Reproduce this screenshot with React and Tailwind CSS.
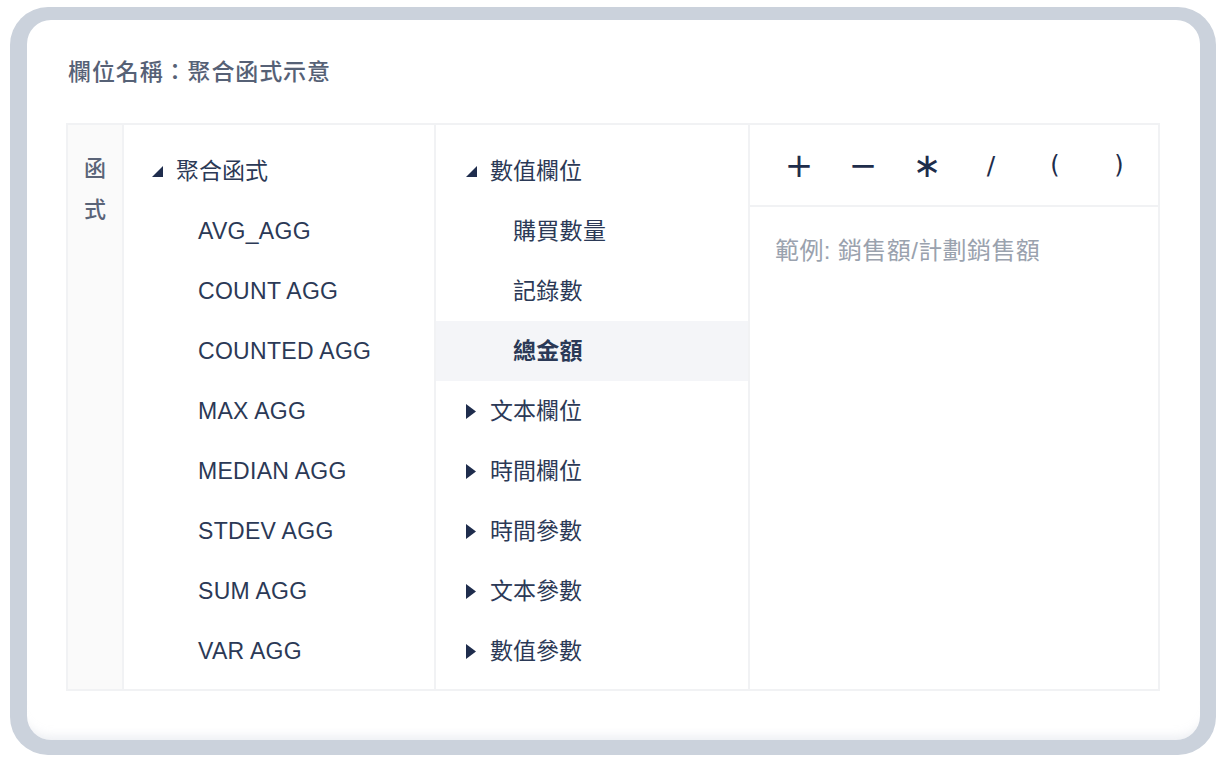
import React from "react";

const FONT = { fontFamily: "'Liberation Sans', 'Noto Sans CJK TC', sans-serif" };

function Down() {
  return (
    <svg width="11" height="11" viewBox="0 0 11 11" className="shrink-0">
      <polygon points="11,0 11,11 0,11" fill="#1f2d4d" />
    </svg>
  );
}

function Right() {
  return (
    <svg width="11" height="15" viewBox="0 0 11 15" className="shrink-0">
      <polygon points="0,0 10,7.5 0,15" fill="#1f2d4d" />
    </svg>
  );
}

function Parent({ label, open, pl }) {
  return (
    <div className={`flex h-[60px] items-center ${pl}`}>
      {open ? <Down /> : <Right />}
      <span className="ml-[13px] text-[23px] text-[#2b3956]">{label}</span>
    </div>
  );
}

function Child({ label, pl, active }) {
  return (
    <div
      className={`flex h-[60px] items-center ${pl} ${active ? "bg-[#f4f5f8] font-bold" : ""}`}
    >
      <span className="text-[23px] tracking-[0.3px] text-[#2b3956]">{label}</span>
    </div>
  );
}

export default function App() {
  const aggs = ["AVG_AGG", "COUNT AGG", "COUNTED AGG", "MAX AGG", "MEDIAN AGG", "STDEV AGG", "SUM AGG", "VAR AGG"];
  const ops = [
    { c: "+", cls: "text-[34px]" },
    { c: "−", cls: "text-[34px]" },
    { c: "∗", cls: "text-[34px]" },
    { c: "/", cls: "text-[25px]" },
    { c: "(", cls: "text-[24px]" },
    { c: ")", cls: "text-[24px]" },
  ];
  return (
    <div className="h-[764px] w-[1226px] bg-white pl-[10px] pt-[7px]" style={FONT}>
      <div className="h-[748px] w-[1206px] rounded-[38px] bg-[#cbd2dc] pl-[17px] pt-[13px]">
        <div className="h-[720px] w-[1173px] rounded-[24px] bg-white pl-[39px] pt-[36px] shadow-[inset_0_-14px_10px_-10px_rgba(203,210,220,0.35)]">
          <div className="pl-[2px] text-[23px] font-medium leading-[32px] tracking-[0.9px] text-[#566176]">
            欄位名稱：聚合函式示意
          </div>
          <div className="mt-[35px] flex w-[1094px] border-2 border-[#f1f2f4]">
            <div className="flex w-[56px] flex-col items-center border-r-2 border-[#f1f2f4] bg-[#fafafa] pt-[23px] text-[22px] font-medium leading-[41px] text-[#5a6478]">
              <span>函</span>
              <span>式</span>
            </div>
            <div className="w-[312px] border-r-2 border-[#f1f2f4] pb-[8px] pt-[16px]">
              <Parent label="聚合函式" open pl="pl-[28px]" />
              {aggs.map((a) => (
                <Child key={a} label={a} pl="pl-[74px]" />
              ))}
            </div>
            <div className="w-[314px] border-r-2 border-[#f1f2f4] pb-[8px] pt-[16px]">
              <Parent label="數值欄位" open pl="pl-[30px]" />
              <Child label="購買數量" pl="pl-[77px]" />
              <Child label="記錄數" pl="pl-[77px]" />
              <Child label="總金額" pl="pl-[77px]" active />
              <Parent label="文本欄位" pl="pl-[30px]" />
              <Parent label="時間欄位" pl="pl-[30px]" />
              <Parent label="時間參數" pl="pl-[30px]" />
              <Parent label="文本參數" pl="pl-[30px]" />
              <Parent label="數值參數" pl="pl-[30px]" />
            </div>
            <div className="flex-1">
              <div className="flex h-[82px] items-center border-b-2 border-[#f1f2f4] pl-[17px]">
                {ops.map((o, i) => (
                  <div
                    key={i}
                    className={`flex w-[64px] justify-center leading-none text-[#1e2d4b] ${o.cls}`}
                    style={{ fontFamily: "'DejaVu Sans', sans-serif" }}
                  >
                    {o.c}
                  </div>
                ))}
              </div>
              <div className="pl-[25px] pt-[28px] text-[24px] leading-[32px] tracking-[0.4px] text-[#9aa2ae]">
                範例: 銷售額/計劃銷售額
              </div>
            </div>
          </div>
        </div>
      </div>
    </div>
  );
}
